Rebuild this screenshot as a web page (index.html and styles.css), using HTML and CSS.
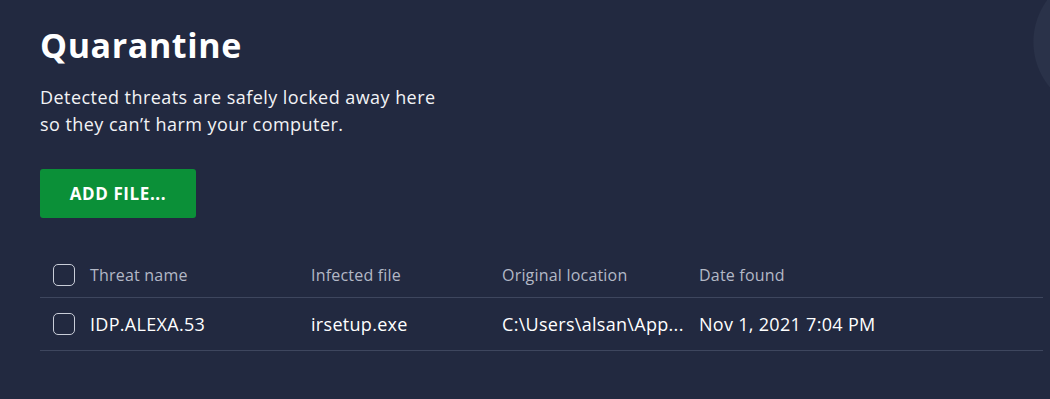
FILE: index.html
```html
<!DOCTYPE html>
<html lang="en">

<head>
    <meta charset="UTF-8">
    <meta name="viewport" content="width=device-width, initial-scale=1.0">
    <title>Quarantine</title>
    <link rel="stylesheet" href="styles.css">
</head>

<body>
    <div class="container">
        <h1>Quarantine</h1>
        <p class="intro">Detected threats are safely locked away here<br>so they can’t harm your computer.</p>

        <button class="add-btn">ADD FILE...</button>

        <!-- Quarantined items -->
        <div class="table">
            <div class="row head">
                <span class="check"></span>
                <span class="col name">Threat name</span>
                <span class="col file">Infected file</span>
                <span class="col location">Original location</span>
                <span class="col date">Date found</span>
            </div>
            <div class="row">
                <span class="check"></span>
                <span class="col name">IDP.ALEXA.53</span>
                <span class="col file">irsetup.exe</span>
                <span class="col location">C:\Users\alsan\App...</span>
                <span class="col date">Nov 1, 2021 7:04 PM</span>
            </div>
        </div>
    </div>
</body>

</html>
```

FILE: styles.css
```css
body {
    font-family: "Open Sans", sans-serif;
    margin: 0;
    padding: 0;
    color: #ffffff;
    /* faint circle peeking in at the top right corner */
    background: radial-gradient(circle at 1104px 42px, #2a3249 70px, #222940 71px);
    min-height: 399px;
}

.container {
    padding: 22px 7px 0 40px;
}

h1 {
    font-size: 34px;
    font-weight: 700;
    margin: 0;
    line-height: 46px;
    letter-spacing: 0.6px;
}

.intro {
    font-size: 18px;
    line-height: 27px;
    margin: 16px 0 0;
    color: #f2f3f6;
    letter-spacing: 0.45px;
}

.add-btn {
    margin-top: 31px;
    width: 156px;
    height: 49px;
    background-color: #0b9038;
    color: #ffffff;
    border: none;
    border-radius: 3px;
    font-family: inherit;
    font-size: 17px;
    font-weight: 700;
    letter-spacing: 0.6px;
    padding: 0;
    cursor: pointer;
}

.table {
    margin-top: 31px;
}

.row {
    display: flex;
    align-items: center;
    height: 52px;
    border-bottom: 1px solid #3e465e;
    font-size: 18px;
    letter-spacing: 0.3px;
}

.row.head {
    height: 44px;
    padding-top: 4px;
    font-size: 16px;
    letter-spacing: 0.2px;
    color: #b3b8c6;
}

.check {
    flex: none;
    width: 20px;
    height: 20px;
    margin: 0 15px 0 13px;
    border: 1.5px solid #c9cdd8;
    border-radius: 5px;
}

.col {
    white-space: nowrap;
}

.name {
    width: 221px;
}

.file {
    width: 191px;
}

.location {
    width: 197px;
}
```
